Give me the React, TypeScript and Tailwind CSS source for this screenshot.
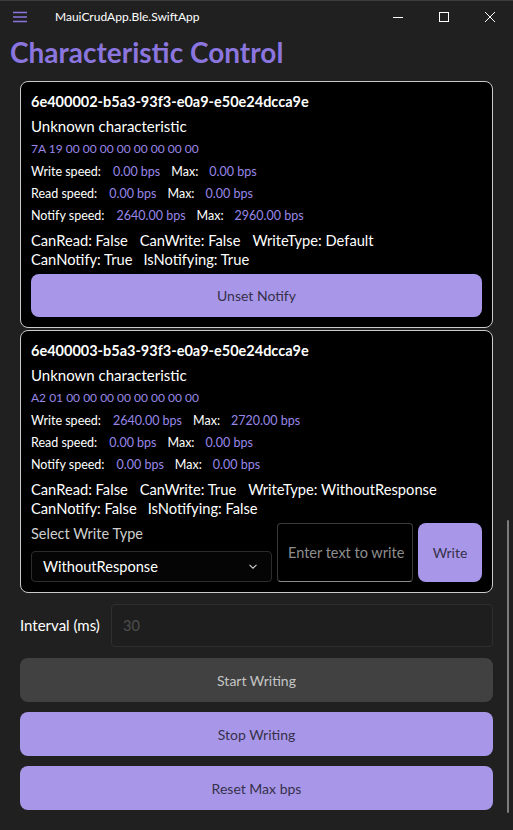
import React from "react";

const PURPLE_TEXT = "text-[#9887e8]";

function SpeedRow({ label, v1, v2, mt }: { label: string; v1: string; v2: string; mt: string }) {
  return (
    <div className={`flex items-center h-[18px] leading-[18px] text-[12.5px] whitespace-nowrap ${mt}`}>
      <span className="text-white">{label}</span>
      <span className={`${PURPLE_TEXT} ml-[12px]`}>{v1}</span>
      <span className="text-white ml-[11px]">Max:</span>
      <span className={`${PURPLE_TEXT} ml-[11px]`}>{v2}</span>
    </div>
  );
}

function PurpleButton({ children, className = "" }: { children: React.ReactNode; className?: string }) {
  return (
    <div
      className={`flex items-center justify-center rounded-[8px] bg-[#a897e8] text-[#36304b] text-[14px] ${className}`}
    >
      {children}
    </div>
  );
}

type CardProps = {
  uuid: string;
  hex: string;
  speeds: [string, string, string][];
  flags1: string[];
  flags2: string[];
  children: React.ReactNode;
  className?: string;
};

function Card({ uuid, hex, speeds, flags1, flags2, children, className = "" }: CardProps) {
  return (
    <div className={`rounded-[8px] border border-[#cacaca] bg-black px-[10px] pt-[10px] pb-[10px] flex flex-col ${className}`}>
      <div className="h-[19px] leading-[19px] text-[14.5px] font-bold text-white whitespace-nowrap">{uuid}</div>
      <div className="mt-[5px] h-[21px] leading-[21px] text-[15px] text-white">Unknown characteristic</div>
      <div className={`mt-[4px] h-[16px] leading-[16px] text-[12px] ${PURPLE_TEXT}`}>{hex}</div>
      <SpeedRow label={speeds[0][0]} v1={speeds[0][1]} v2={speeds[0][2]} mt="mt-[6px]" />
      <SpeedRow label={speeds[1][0]} v1={speeds[1][1]} v2={speeds[1][2]} mt="mt-[4px]" />
      <SpeedRow label={speeds[2][0]} v1={speeds[2][1]} v2={speeds[2][2]} mt="mt-[4px]" />
      <div className="mt-[6px] h-[19px] leading-[19px] text-[14.7px] text-white flex gap-[12px] whitespace-nowrap">
        {flags1.map((f) => (
          <span key={f}>{f}</span>
        ))}
      </div>
      <div className="h-[19px] leading-[19px] text-[14.7px] text-white flex gap-[11px] whitespace-nowrap">
        {flags2.map((f) => (
          <span key={f}>{f}</span>
        ))}
      </div>
      {children}
    </div>
  );
}

export default function App() {
  return (
    <div className="relative w-[513px] h-[830px] overflow-hidden bg-[#202020] font-['Lato','Open_Sans',sans-serif]">
      {/* window top edge */}
      <div className="h-px bg-[#3c3c3c]" />
      {/* title bar */}
      <div className="flex items-center h-[31px]">
        <svg width="14" height="12" viewBox="0 0 14 12" className="ml-[13px] mt-[1px]">
          <path d="M0 1.5H14M0 6H14M0 10.5H14" stroke="#8a74dd" strokeWidth="1.3" />
        </svg>
        <span className="ml-[28px] text-[12px] text-white whitespace-nowrap">MauiCrudApp.Ble.SwiftApp</span>
        <div className="ml-auto flex h-full">
          <div className="w-[46px] h-full flex items-center justify-center">
            <svg width="10" height="10" viewBox="0 0 10 10">
              <path d="M0 5.5H10" stroke="#ffffff" strokeWidth="1" />
            </svg>
          </div>
          <div className="w-[46px] h-full flex items-center justify-center">
            <svg width="10" height="10" viewBox="0 0 10 10">
              <rect x="0.5" y="0.5" width="9" height="9" fill="none" stroke="#ffffff" strokeWidth="1" />
            </svg>
          </div>
          <div className="w-[46px] h-full flex items-center justify-center">
            <svg width="10" height="10" viewBox="0 0 10 10">
              <path d="M0 0L10 10M10 0L0 10" stroke="#ffffff" strokeWidth="1" />
            </svg>
          </div>
        </div>
      </div>

      {/* heading */}
      <div className="h-[40px] leading-[40px] pl-[10px] text-[28px] font-bold text-[#8b75de] whitespace-nowrap">
        Characteristic Control
      </div>

      <div className="px-[20px] mt-[9px] flex flex-col">
        <Card
          uuid="6e400002-b5a3-93f3-e0a9-e50e24dcca9e"
          hex="7A 19 00 00 00 00 00 00 00 00"
          speeds={[
            ["Write speed:", "0.00 bps", "0.00 bps"],
            ["Read speed:", "0.00 bps", "0.00 bps"],
            ["Notify speed:", "2640.00 bps", "2960.00 bps"],
          ]}
          flags1={["CanRead: False", "CanWrite: False", "WriteType: Default"]}
          flags2={["CanNotify: True", "IsNotifying: True"]}
        >
          <PurpleButton className="mt-[5px] h-[43px]">Unset Notify</PurpleButton>
        </Card>

        <Card
          className="mt-[2px]"
          uuid="6e400003-b5a3-93f3-e0a9-e50e24dcca9e"
          hex="A2 01 00 00 00 00 00 00 00 00"
          speeds={[
            ["Write speed:", "2640.00 bps", "2720.00 bps"],
            ["Read speed:", "0.00 bps", "0.00 bps"],
            ["Notify speed:", "0.00 bps", "0.00 bps"],
          ]}
          flags1={["CanRead: False", "CanWrite: True", "WriteType: WithoutResponse"]}
          flags2={["CanNotify: False", "IsNotifying: False"]}
        >
          <div className="mt-[5px] h-[59px] flex gap-[5px]">
            <div className="flex-1 flex flex-col">
              <div className="h-[22px] leading-[22px] text-[14.5px] text-[#cfcfcf]">Select Write Type</div>
              <div className="mt-auto h-[31px] rounded-[4px] border border-[#2c2c2c] bg-[#050505] flex items-center pl-[11px] pr-[14px]">
                <span className="text-[14.6px] text-white">WithoutResponse</span>
                <svg width="8" height="5" viewBox="0 0 8 5" className="ml-auto">
                  <path d="M0.5 0.8L4 4.2L7.5 0.8" fill="none" stroke="#d0d0d0" strokeWidth="1.1" />
                </svg>
              </div>
            </div>
            <div className="w-[136px] h-full rounded-[4px] border border-[#3a3a3a] border-b-[#8a8a8a] bg-black flex items-center pl-[10px]">
              <span className="text-[14.5px] text-[#8e8e8e] whitespace-nowrap">Enter text to write</span>
            </div>
            <PurpleButton className="w-[64px] h-full">Write</PurpleButton>
          </div>
        </Card>

        <div className="mt-[11px] h-[43px] flex items-center">
          <span className="w-[91px] text-[15px] text-white whitespace-nowrap">Interval (ms)</span>
          <div className="flex-1 h-full rounded-[4px] border border-[#2f2f2f] bg-[#1e1e1e] flex items-center pl-[11px]">
            <span className="text-[14.5px] text-[#4e4e4e]">30</span>
          </div>
        </div>

        <div className="mt-[11px] h-[44px] rounded-[8px] bg-[#414141] flex items-center justify-center text-[14px] text-[#c6c6c6]">
          Start Writing
        </div>
        <PurpleButton className="mt-[10px] h-[44px]">Stop Writing</PurpleButton>
        <PurpleButton className="mt-[10px] h-[44px]">Reset Max bps</PurpleButton>
      </div>

      {/* scrollbar */}
      <div className="absolute left-[507px] top-[520px] w-[2px] h-[293px] rounded-full bg-[#7c7c7c]" />
    </div>
  );
}
